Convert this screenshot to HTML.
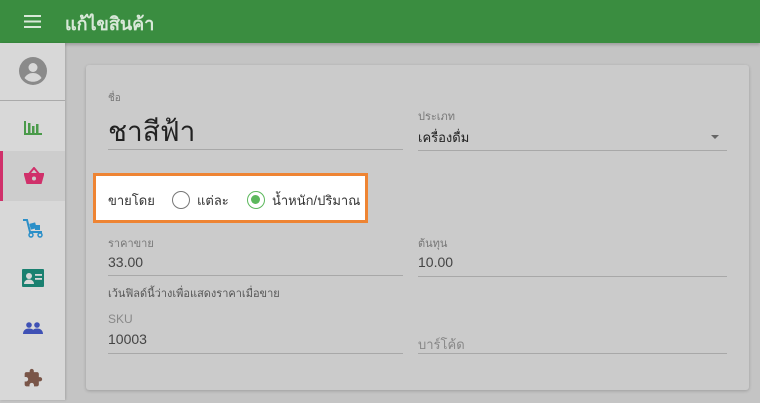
<!DOCTYPE html>
<html><head><meta charset="utf-8"><style>
*{margin:0;padding:0;box-sizing:border-box}
body{width:760px;height:400px;overflow:hidden;background:#c4c4c4;font-family:"Liberation Sans","Noto Sans CJK SC",sans-serif;position:relative}
.hdr{position:absolute;left:0;top:0;width:760px;height:43px;background:#3a8d40;box-shadow:0 2px 3px rgba(0,0,0,.2)}
.hdr .t{position:absolute;left:65px;top:9px;color:#d8e8d8;font-size:18px;font-weight:bold}
.side{position:absolute;left:0;top:43px;width:65px;height:357px;background:#d8d8d8;box-shadow:1px 0 2px rgba(0,0,0,.15)}
.it{position:absolute;left:0;width:65px;height:50px;display:flex;align-items:center;justify-content:center}
.card{position:absolute;left:86px;top:65px;width:663px;height:325px;background:#cbcbcb;border-radius:3px;box-shadow:0 1px 3px rgba(0,0,0,.2)}
.lbl{position:absolute;font-size:11px;color:#777}
.val{position:absolute;font-size:14px;color:#333}
.ln{position:absolute;height:1px;background:#a8a8a8}
</style></head><body>
<div class="hdr">
<svg style="position:absolute;left:24px;top:15px" width="17" height="13"><rect y="0" width="17" height="2" fill="#d8e8d8"/><rect y="5.5" width="17" height="2" fill="#d8e8d8"/><rect y="11" width="17" height="2" fill="#d8e8d8"/></svg>
<div class="t">แก้ไขสินค้า</div></div>
<div class="side">
<div class="it" style="top:3px"><svg width="28" height="28" viewBox="0 0 28 28"><circle cx="14" cy="14" r="14" fill="#8a8a8a"/><circle cx="14" cy="10.5" r="4.5" fill="#d8d8d8"/><path d="M5.5 21c2-3.5 5-5 8.5-5s6.5 1.5 8.5 5c-2.3 2.5-5.2 3.8-8.5 3.8s-6.2-1.3-8.5-3.8z" fill="#d8d8d8"/></svg></div>
<div style="position:absolute;left:0;top:57px;width:65px;height:1px;background:#aaa"></div>
<div class="it" style="top:59px"><svg width="18" height="16"><rect x="0" y="2" width="2" height="14" fill="#4a9a4a"/><rect x="0" y="14" width="18" height="2" fill="#4a9a4a"/><rect x="4" y="4" width="2.5" height="10" fill="#4a9a4a"/><rect x="8" y="7" width="2.5" height="7" fill="#4a9a4a"/><rect x="12" y="5" width="2.5" height="9" fill="#4a9a4a"/></svg></div>
<div class="it" style="top:108px;background:#cdcdcd;border-left:3px solid #d0306a"><svg width="20" height="18"><path d="M5 7L10 1L15 7" stroke="#d0306a" stroke-width="2" fill="none"/><path d="M0 6h20v2l-2.5 9h-15L0 8z" fill="#d0306a"/><circle cx="10" cy="11.5" r="2" fill="#cdcdcd"/></svg></div>
<div class="it" style="top:160px"><svg width="22" height="20"><path d="M1 2h4l3 12h12" stroke="#2b8fc8" stroke-width="2" fill="none"/><rect x="8" y="5" width="6" height="6" fill="#2b8fc8" transform="rotate(-15 11 8)"/><rect x="13" y="7" width="5" height="5" fill="#2b8fc8"/><circle cx="9" cy="17" r="2" fill="none" stroke="#2b8fc8" stroke-width="1.5"/><circle cx="18" cy="17" r="2" fill="none" stroke="#2b8fc8" stroke-width="1.5"/></svg></div>
<div class="it" style="top:210px"><svg width="22" height="18"><rect width="22" height="18" rx="1" fill="#1a8070"/><circle cx="7" cy="7" r="3" fill="#d8d8d8"/><path d="M2 15c0-3 2.5-4.5 5-4.5s5 1.5 5 4.5z" fill="#d8d8d8"/><rect x="13" y="5" width="7" height="1.8" fill="#d8d8d8"/><rect x="13" y="9" width="7" height="1.8" fill="#d8d8d8"/></svg></div>
<div class="it" style="top:260px"><svg width="20" height="12"><circle cx="6" cy="3" r="2.8" fill="#3f51b5"/><circle cx="14" cy="3" r="2.8" fill="#3f51b5"/><path d="M0 12c0-4 3-5.5 6-5.5s6 1.5 6 5.5zM9 12c0-4 2-5.5 5-5.5s6 1.5 6 5.5z" fill="#3f51b5"/></svg></div>
<div class="it" style="top:310px"><svg width="20" height="20" viewBox="0 0 24 24"><path fill="#795548" d="M20.5 11H19V7c0-1.1-.9-2-2-2h-4V3.5C13 2.12 11.88 1 10.5 1S8 2.12 8 3.5V5H4c-1.1 0-2 .9-2 2v3.8h1.5c1.49 0 2.7 1.21 2.7 2.7s-1.21 2.7-2.7 2.7H2V20c0 1.1.9 2 2 2h3.8v-1.5c0-1.49 1.21-2.7 2.7-2.7 1.49 0 2.7 1.21 2.7 2.7V22H17c1.1 0 2-.9 2-2v-4h1.5c1.38 0 2.5-1.12 2.5-2.5S21.88 11 20.5 11z"/></svg></div>
</div>
<div class="card">
<div class="lbl" style="left:22px;top:26px;font-size:10px">ชื่อ</div>
<div class="val" style="left:22px;top:45px;font-size:28px;color:#222">ชาสีฟ้า</div>
<div class="ln" style="left:22px;top:84px;width:295px"></div>
<div class="lbl" style="left:332px;top:42px">ประเภท</div>
<div class="val" style="left:332px;top:62px;font-size:13px;color:#222">เครื่องดื่ม</div>
<svg style="position:absolute;left:625px;top:70px" width="8" height="4"><path d="M0 0h8L4 4z" fill="#666"/></svg>
<div class="ln" style="left:332px;top:85px;width:309px"></div>
<div style="position:absolute;left:7px;top:108px;width:275px;height:50px;background:#fff;border:3px solid #ee8433"></div>
<div style="position:absolute;left:22px;top:125px;font-size:13px;color:#333">ขายโดย</div>
<div style="position:absolute;left:86px;top:126px;width:18px;height:18px;border:1.5px solid #777;border-radius:50%;background:#fff"></div>
<div style="position:absolute;left:111px;top:125px;font-size:13px;color:#333">แต่ละ</div>
<div style="position:absolute;left:161px;top:126px;width:18px;height:18px;border:1.5px solid #5cb85c;border-radius:50%;background:#fff"><div style="margin:3px;width:9px;height:9px;border-radius:50%;background:#5cb85c"></div></div>
<div style="position:absolute;left:186px;top:125px;font-size:13px;color:#333">น้ำหนัก/ปริมาณ</div>
<div class="lbl" style="left:22px;top:169px">ราคาขาย</div>
<div class="val" style="left:22px;top:189px;color:#444">33.00</div>
<div class="ln" style="left:22px;top:210px;width:295px"></div>
<div class="lbl" style="left:22px;top:219px;color:#555">เว้นฟิลด์นี้ว่างเพื่อแสดงราคาเมื่อขาย</div>
<div class="lbl" style="left:332px;top:169px">ต้นทุน</div>
<div class="val" style="left:332px;top:189px;color:#444">10.00</div>
<div class="ln" style="left:332px;top:211px;width:309px"></div>
<div class="lbl" style="left:22px;top:247px;font-size:12px;color:#888">SKU</div>
<div class="val" style="left:22px;top:266px;color:#444">10003</div>
<div class="ln" style="left:22px;top:288px;width:295px"></div>
<div class="lbl" style="left:332px;top:269px;font-size:13px;color:#888">บาร์โค้ด</div>
<div class="ln" style="left:332px;top:288px;width:309px"></div>
</div>
</body></html>
